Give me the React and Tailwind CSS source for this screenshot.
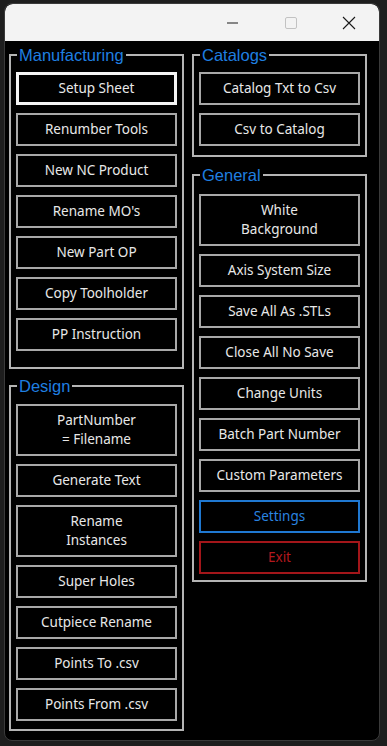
import React from "react";

const manufacturing = [
  "Setup Sheet",
  "Renumber Tools",
  "New NC Product",
  "Rename MO's",
  "New Part OP",
  "Copy Toolholder",
  "PP Instruction",
];

const design = [
  ["PartNumber", "= Filename"],
  "Generate Text",
  ["Rename", "Instances"],
  "Super Holes",
  "Cutpiece Rename",
  "Points To .csv",
  "Points From .csv",
];

const catalogs = ["Catalog Txt to Csv", "Csv to Catalog"];

const general = [
  ["White", "Background"],
  "Axis System Size",
  "Save All As .STLs",
  "Close All No Save",
  "Change Units",
  "Batch Part Number",
  "Custom Parameters",
];

const Btn = ({ label, focused, variant }) => {
  const tall = Array.isArray(label);
  let tone = "border-[#a8a8a8] text-[#e8e8e8]";
  if (focused) tone = "border-[#f4f4f4] text-[#e8e8e8] shadow-[inset_0_0_0_1px_#f4f4f4]";
  if (variant === "blue") tone = "border-[#1f78d1] text-[#2a84e0]";
  if (variant === "red") tone = "border-[#a3161a] text-[#b3191e]";
  return (
    <button
      className={`w-full ${tall ? "h-[52px]" : "h-[33px]"} bg-black border-2 ${tone} flex flex-col items-center justify-center text-[13.5px] leading-[19px] font-['Noto_Sans',sans-serif]`}
    >
      {tall ? label.map((l) => <span key={l}>{l}</span>) : label}
    </button>
  );
};

const Group = ({ title, className = "", inner = "", children }) => (
  <fieldset className={`border-2 border-[#b4b4b4] ${className}`}>
    <legend className="ml-[6px] px-[2px] text-[16.5px] leading-[18px] text-[#1f7fe0] font-['Liberation_Sans',Arial,sans-serif]">
      {title}
    </legend>
    <div className={`flex flex-col gap-[8px] px-[5px] ${inner}`}>{children}</div>
  </fieldset>
);

const TitleBar = () => (
  <div className="h-[37px] bg-[#f3f3f3] rounded-t-[8px] flex items-center justify-end">
    <div className="w-[58px] h-full flex items-center justify-center">
      <svg width="12" height="2" viewBox="0 0 12 2">
        <rect x="0" y="0.5" width="11" height="1" fill="#1a1a1a" />
      </svg>
    </div>
    <div className="w-[58px] h-full flex items-center justify-center">
      <svg width="12" height="12" viewBox="0 0 12 12">
        <rect x="0.5" y="0.5" width="11" height="11" rx="1.5" fill="none" stroke="#c2c2c2" />
      </svg>
    </div>
    <div className="w-[58px] h-full flex items-center justify-center mr-[1px]">
      <svg width="14" height="14" viewBox="0 0 14 14">
        <path d="M1 1 L13 13 M13 1 L1 13" stroke="#1a1a1a" strokeWidth="1.1" />
      </svg>
    </div>
  </div>
);

export default function App() {
  return (
    <div className="w-[387px] h-[746px] bg-[#1e1e1e] pl-[4px] pt-[3px]">
      <div className="w-[376px] h-[738px] rounded-[8px] border border-[#3a3a3a] overflow-hidden flex flex-col bg-black">
        <TitleBar />
        <div className="flex-1 flex gap-[8px] pl-[4px] pt-[5px]">
          <div className="w-[175px] flex flex-col">
            <Group title="Manufacturing" inner="pt-[8px] pb-[16px]">
              {manufacturing.map((m, i) => (
                <Btn key={m} label={m} focused={i === 0} />
              ))}
            </Group>
            <Group title="Design" className="mt-[8px]" inner="pt-[9px] pb-[8px]">
              {design.map((d) => (
                <Btn key={Array.isArray(d) ? d.join() : d} label={d} />
              ))}
            </Group>
          </div>
          <div className="w-[175px] flex flex-col">
            <Group title="Catalogs" inner="pt-[8px] pb-[9px]">
              {catalogs.map((c) => (
                <Btn key={c} label={c} />
              ))}
            </Group>
            <Group title="General" className="mt-[9px]" inner="pt-[10px] pb-[6px]">
              {general.map((g) => (
                <Btn key={Array.isArray(g) ? g.join() : g} label={g} />
              ))}
              <Btn label="Settings" variant="blue" />
              <Btn label="Exit" variant="red" />
            </Group>
          </div>
        </div>
      </div>
    </div>
  );
}
